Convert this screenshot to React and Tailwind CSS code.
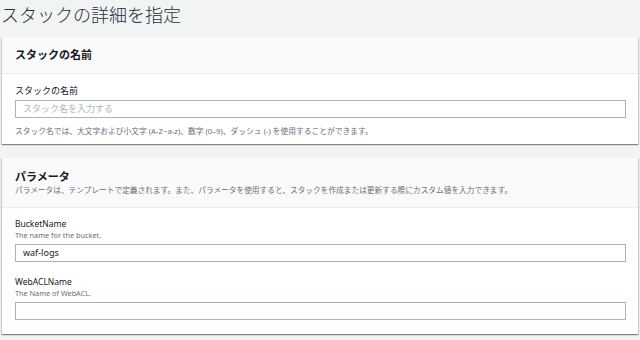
export default function App() {
  const jp = "font-['Noto_Sans','Noto_Sans_CJK_JP',sans-serif]";
  const card =
    "bg-white shadow-[0_1px_1px_0_rgba(0,28,36,0.3),1px_1px_1px_0_rgba(0,28,36,0.15),-1px_1px_1px_0_rgba(0,28,36,0.15)]";
  return (
    <div className={`w-[640px] h-[340px] overflow-hidden bg-[#f2f3f3] px-[2px] ${jp}`}>
      <h1 className="text-[18px] leading-[30px] text-[#232f3e] font-light -ml-[1px]">スタックの詳細を指定</h1>
      <div className={`mt-[7px] ${card}`}>
        <div className="h-[37px] flex items-center pl-[13px] bg-[#fafafa] border-b border-[#eaeded]">
          <h2 className="text-[11px] font-bold text-[#16191f]">スタックの名前</h2>
        </div>
        <div className="pl-[13px] pr-[12px] pt-[10px] pb-[7px]">
          <div className="text-[9px] leading-[14px] text-[#16191f]">スタックの名前</div>
          <div className="mt-[2px] h-[18px] border border-[#aab7b8] flex items-center pl-[7px] text-[9px] text-[#aab7b8]">
            スタック名を入力する
          </div>
          <div className="mt-[7px] text-[7.75px] leading-[12px] text-[#687078]">
            スタック名では、大文字および小文字 (A-Z~a-z)、数字 (0–9)、ダッシュ (-) を使用することができます。
          </div>
        </div>
      </div>
      <div className={`mt-[14px] ${card}`}>
        <div className="h-[50px] flex flex-col justify-center pl-[13px] bg-[#fafafa] border-b border-[#eaeded]">
          <h2 className="text-[11px] leading-[15px] font-bold text-[#16191f]">パラメータ</h2>
          <div className="text-[7.7px] leading-[12px] text-[#687078]">
            パラメータは、テンプレートで定義されます。また、パラメータを使用すると、スタックを作成または更新する際にカスタム値を入力できます。
          </div>
        </div>
        <div className="pl-[13px] pr-[12px] pt-[10px] pb-[14px]">
          <div className="text-[8.5px] leading-[12px] text-[#16191f]">BucketName</div>
          <div className="text-[7.3px] leading-[11px] text-[#687078]">The name for the bucket.</div>
          <div className="mt-[3px] h-[18px] border border-[#aab7b8] flex items-center pl-[7px] text-[9px] text-[#16191f]">
            waf-logs
          </div>
          <div className="mt-[14px] text-[8.5px] leading-[12px] text-[#16191f]">WebACLName</div>
          <div className="text-[7.3px] leading-[11px] text-[#687078]">The Name of WebACL.</div>
          <div className="mt-[3px] h-[18px] border border-[#aab7b8]"></div>
        </div>
      </div>
    </div>
  );
}
